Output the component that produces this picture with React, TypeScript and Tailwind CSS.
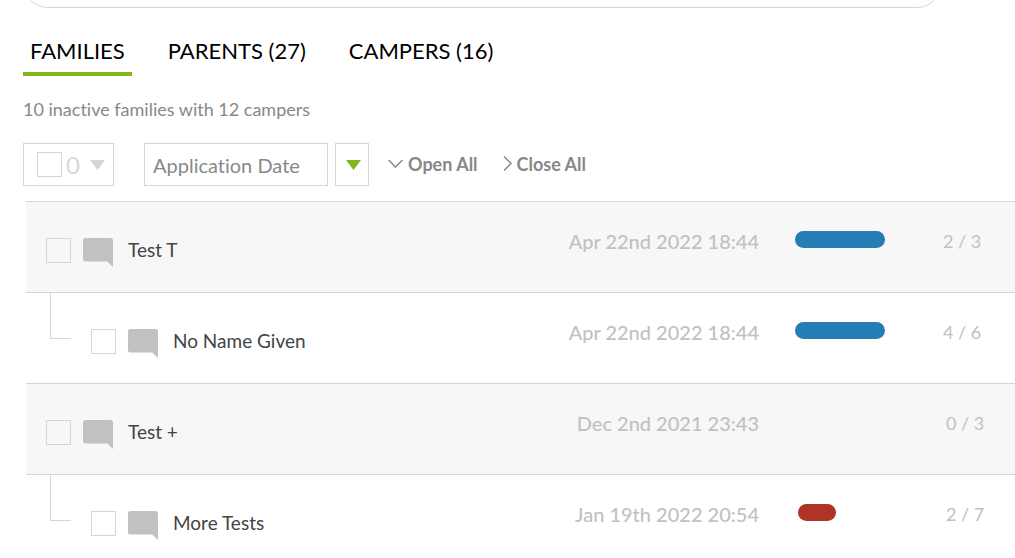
const tabs = [
  { label: "FAMILIES", active: true },
  { label: "PARENTS (27)", active: false },
  { label: "CAMPERS (16)", active: false },
];

const families = [
  {
    name: "Test T",
    date: "Apr 22nd 2022 18:44",
    done: 2,
    total: 3,
    progress: 100,
    color: "bg-[#247db5]",
    child: false,
  },
  {
    name: "No Name Given",
    date: "Apr 22nd 2022 18:44",
    done: 4,
    total: 6,
    progress: 100,
    color: "bg-[#247db5]",
    child: true,
  },
  {
    name: "Test +",
    date: "Dec 2nd 2021 23:43",
    done: 0,
    total: 3,
    progress: 0,
    color: "bg-[#b03425]",
    child: false,
  },
  {
    name: "More Tests",
    date: "Jan 19th 2022 20:54",
    done: 2,
    total: 7,
    progress: 42,
    color: "bg-[#b03425]",
    child: true,
  },
];

function Checkbox({ label }: { label: string }) {
  return (
    <input
      type="checkbox"
      aria-label={label}
      className="size-[25px] shrink-0 appearance-none border border-[#d6d6d6] checked:bg-[#85b71d]"
    />
  );
}

function Triangle({ className }: { className: string }) {
  return (
    <svg viewBox="0 0 15 10" className={`h-[10px] w-[15px] ${className}`} fill="currentColor">
      <path d="M0 0h15L7.5 10z" />
    </svg>
  );
}

function CommentIcon() {
  return (
    <svg viewBox="0 0 30 29" className="h-[29px] w-[30px]" fill="#c1c1c1">
      <path d="M2.5 0h25A2.5 2.5 0 0 1 30 2.5V29l-5.8-5.6H2.5A2.5 2.5 0 0 1 0 20.9V2.5A2.5 2.5 0 0 1 2.5 0z" />
    </svg>
  );
}

function SearchBar() {
  return (
    <div className="flex h-2 items-end overflow-hidden pl-6 pr-[74px]">
      <input
        type="search"
        aria-label="Search"
        className="h-12 w-full shrink-0 rounded-full border border-[#d6d6d6] px-6 outline-none"
      />
    </div>
  );
}

function Toolbar() {
  return (
    <div className="mt-5 flex h-[43px] pl-[23px] text-[#888]">
      <div className="flex w-[91px] items-center border border-[#d6d6d6] pl-[13px] text-2xl text-[#d8d8d8]">
        <Checkbox label="Select all families" />
        <span className="ml-1">0</span>
        <button type="button" aria-label="Selection options" className="ml-[10px]">
          <Triangle className="text-[#d6d6d6]" />
        </button>
      </div>
      <select
        aria-label="Sort by"
        className="ml-[30px] w-[184px] appearance-none border border-[#d6d6d6] px-2 pt-px text-xl"
      >
        <option>Application Date</option>
        <option>Family Name</option>
      </select>
      <button
        type="button"
        aria-label="Sort direction"
        className="ml-[7px] flex w-[34px] items-center justify-center border border-[#d6d6d6] pl-[3px]"
      >
        <Triangle className="text-[#85b71d]" />
      </button>
      <button type="button" className="ml-[19px] flex items-center gap-[5px] pb-0.5 text-lg font-bold">
        <svg viewBox="0 0 15 9" className="h-[9px] w-[15px]" fill="none" stroke="currentColor" strokeWidth="1.5">
          <path d="M.5 1l7 7 7-7" />
        </svg>
        Open All
      </button>
      <button type="button" className="ml-[25px] flex items-center gap-[5px] pb-0.5 text-lg font-bold">
        <svg viewBox="0 0 9 15" className="h-[15px] w-[9px]" fill="none" stroke="currentColor" strokeWidth="1.5">
          <path d="M1 .5l7 7-7 7" />
        </svg>
        Close All
      </button>
    </div>
  );
}

function FamilyTable() {
  return (
    <div className="mt-[15px] pl-[26px]">
      <table className="w-full table-fixed border-separate border-spacing-0">
        <tbody>
          {families.map((family, index) => (
            <tr
              key={index}
              className={family.child ? "h-[91px] align-top" : "h-[91px] bg-[#f7f7f7] align-top"}
            >
              <td className="border-t border-[#d6d6d6] p-0">
                <div className={family.child ? "flex pl-6" : "flex pl-5"}>
                  {family.child && (
                    <span className="mr-5 h-[46px] w-[21px] border-b border-l border-[#d6d6d6]" />
                  )}
                  <div className="-mb-1.5 flex h-[96px] items-center gap-3">
                    <Checkbox label={`Select ${family.name}`} />
                    <button type="button" aria-label={`Comments on ${family.name}`} className="pt-1">
                      <CommentIcon />
                    </button>
                    <a href="#" className="ml-[3px] text-[19px] text-[#444]">
                      {family.name}
                    </a>
                  </div>
                </div>
              </td>
              <td className="w-[220px] border-t border-[#d6d6d6] p-0 pt-[25px] pr-px text-right text-xl font-medium text-[#c1c1c1]">
                {family.date}
              </td>
              <td className="w-[255px] border-t border-[#d6d6d6] p-0 pl-[35px] pt-[25px]">
                <div className="flex">
                  <div
                    role="progressbar"
                    aria-label={`${family.name} forms`}
                    aria-valuenow={family.progress}
                    className={
                      family.progress === 100 ? "mt-1 w-[90px]" : "mt-1 w-[93px] pl-[3px]"
                    }
                  >
                    {family.progress > 0 && (
                      <div
                        className={`h-[17px] rounded-full ${family.color}`}
                        style={{ width: `${family.progress}%` }}
                      />
                    )}
                  </div>
                  <span className="ml-[58px] text-lg text-[#c1c1c1]">
                    {family.done} / {family.total}
                  </span>
                </div>
              </td>
            </tr>
          ))}
        </tbody>
      </table>
    </div>
  );
}

export default function App() {
  return (
    <main className="h-screen overflow-hidden bg-white font-['Lato',sans-serif] [font-variant-ligatures:none]">
      <SearchBar />
      <nav className="mt-[26px] flex gap-[29px] pl-[23px]">
        {tabs.map((tab) => (
          <a
            key={tab.label}
            href="#"
            className={
              tab.active
                ? "border-b-4 border-[#85b71d] px-[7px] pb-[5px] text-[22px] leading-[33px] text-black"
                : "border-b-4 border-transparent px-[7px] pb-[5px] text-[22px] leading-[33px] text-black"
            }
          >
            {tab.label}
          </a>
        ))}
      </nav>
      <p className="mt-[19px] pl-[23px] text-lg text-[#888]">10 inactive families with 12 campers</p>
      <Toolbar />
      <FamilyTable />
    </main>
  );
}
